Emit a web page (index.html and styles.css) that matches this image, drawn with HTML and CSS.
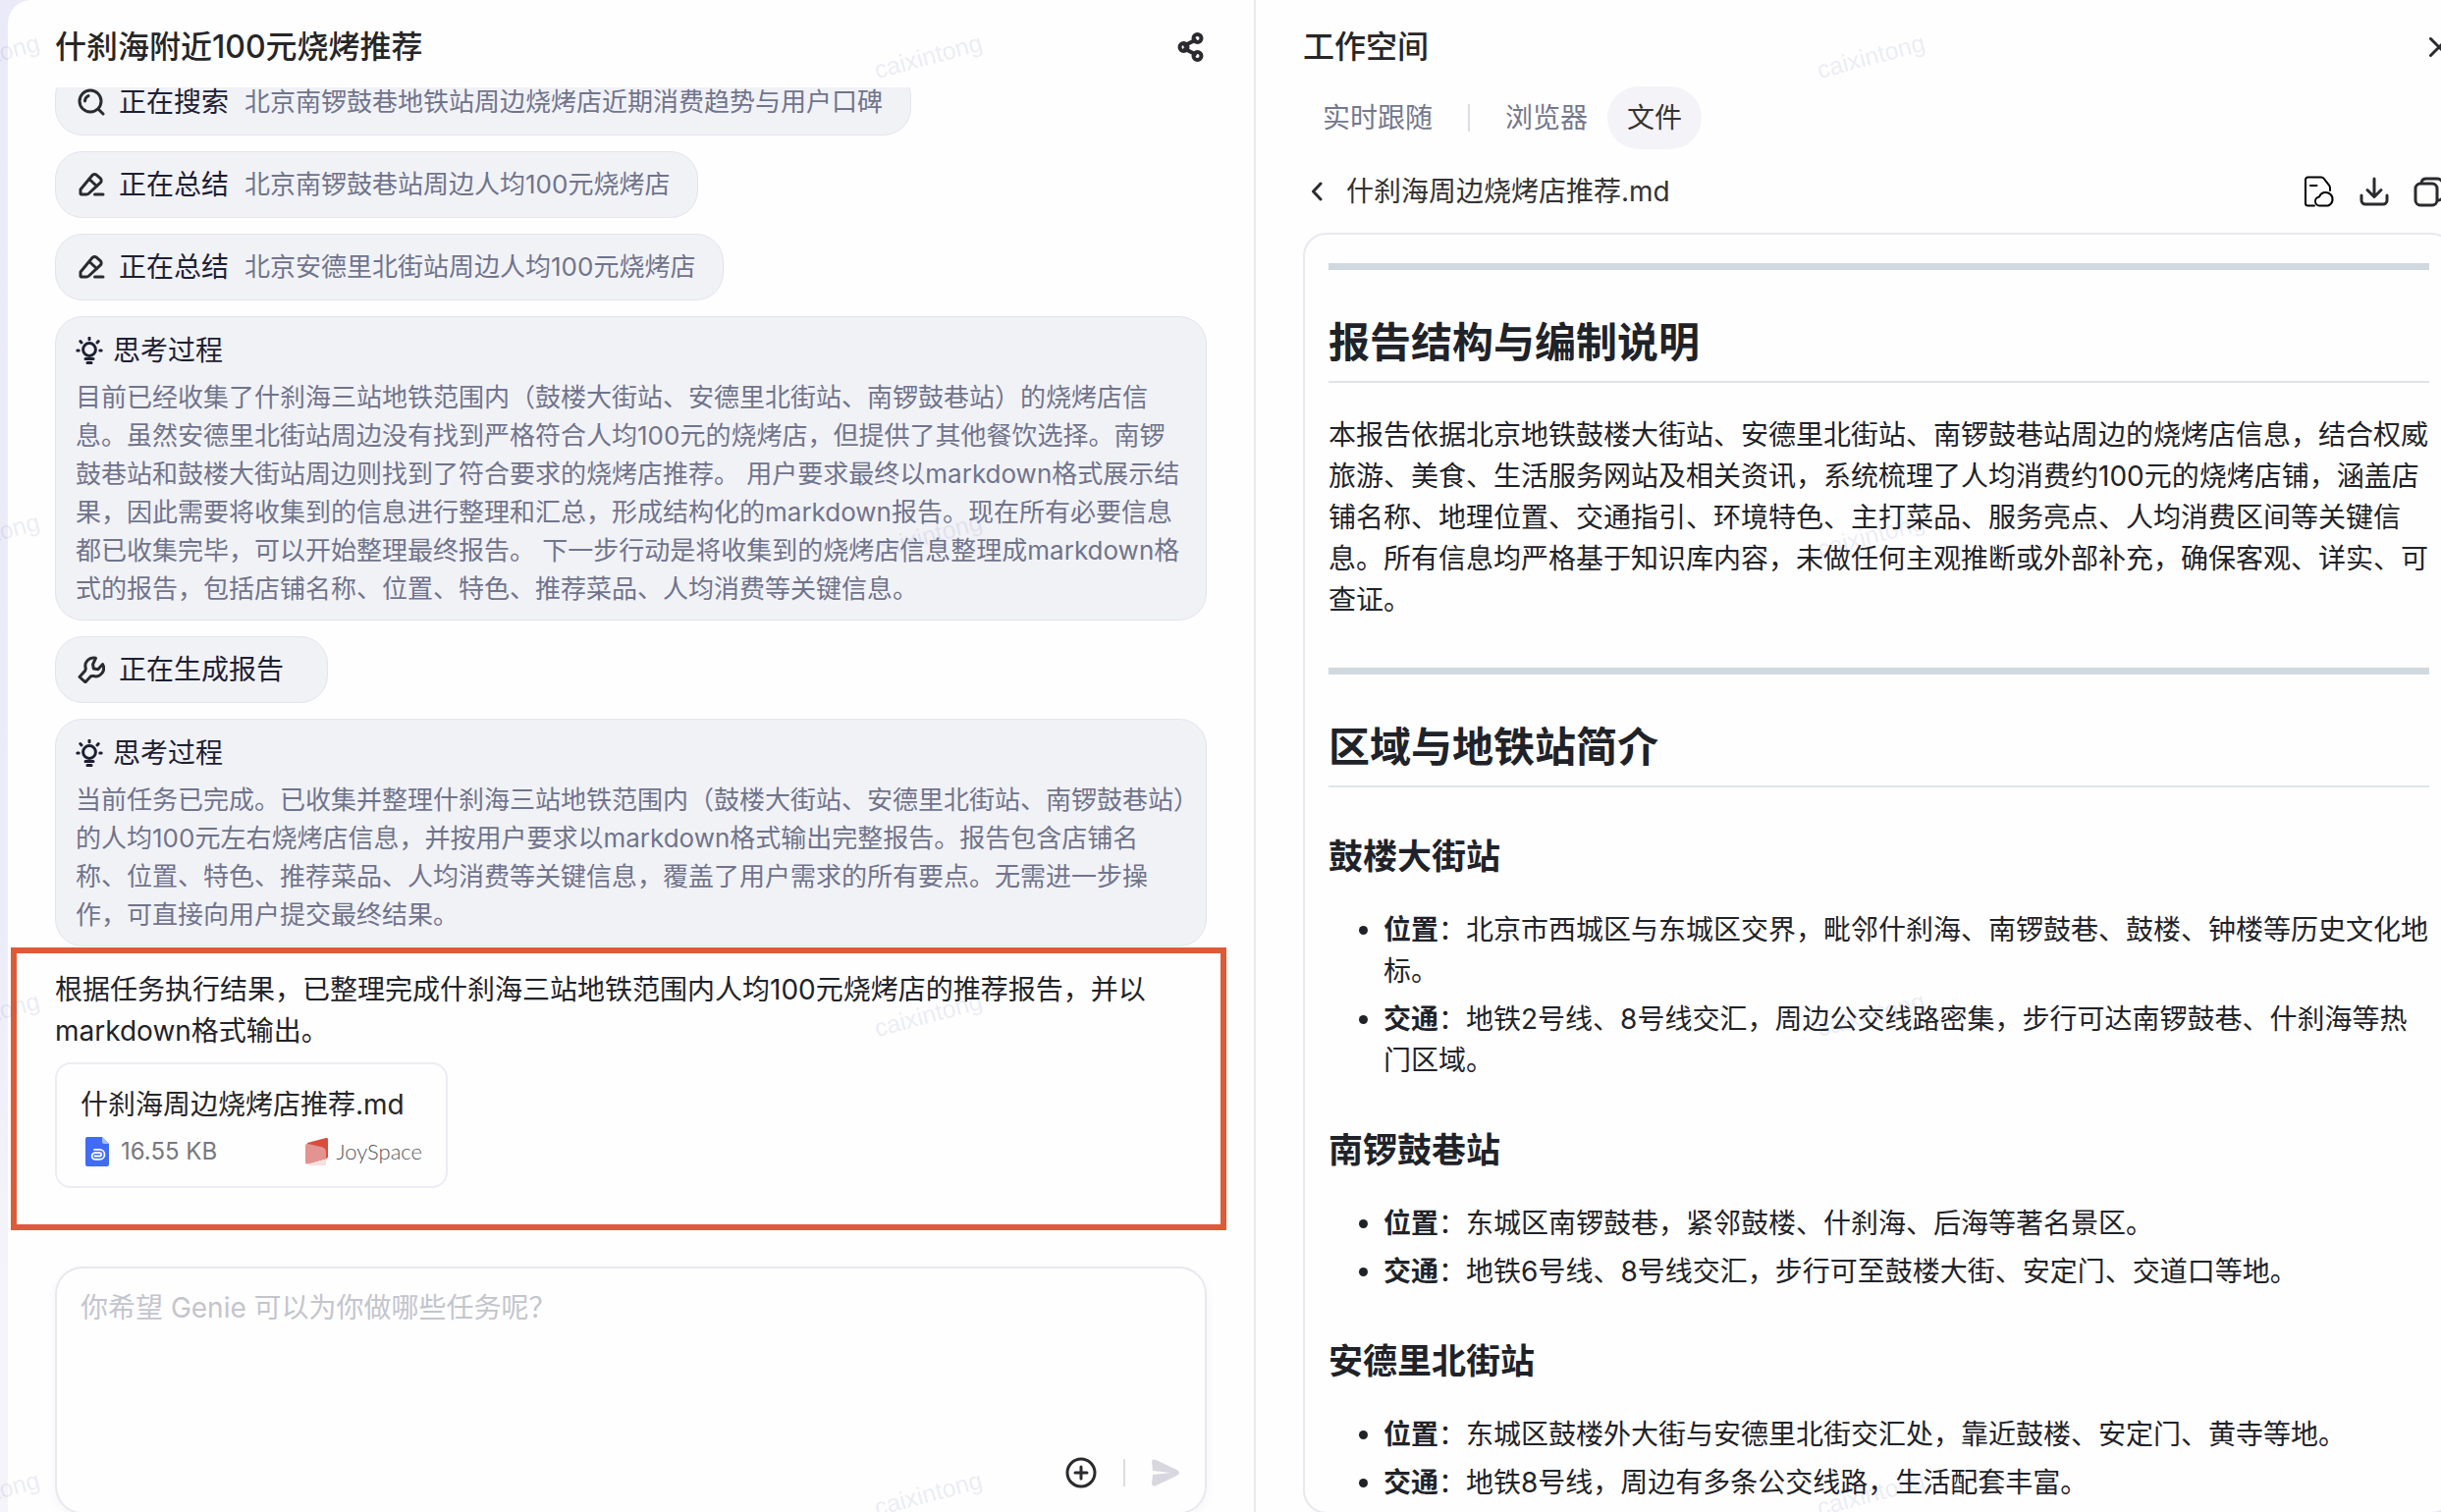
FILE: index.html
```html
<!DOCTYPE html>
<html lang="zh-CN">
  <head>
    <meta charset="UTF-8" />
    <meta name="viewport" content="width=device-width, initial-scale=1.0" />
    <title>什刹海附近100元烧烤推荐</title>
    <link rel="stylesheet" href="styles.css">
  </head>
  <body>
    <!-- Shared icons -->
    <svg class="icon-defs" aria-hidden="true">
      <symbol id="icon-pencil" viewBox="0 0 28 28">
        <path d="M3 23.500v-4.500L15 4.500a3 3 0 0 1 4.200-.3l4 3.500a3 3 0 0 1 .2 4.200L11.500 23Q10.500 24 9 24H3.500z" />
        <path d="m12 8.500 7.500 7M17.500 24H26" />
      </symbol>
      <symbol id="icon-bulb" viewBox="0 0 28 28">
        <circle cx="14" cy="13" r="6.4" />
        <path d="M14 1.2v1.6M4.8 4.6l1.2 1.3M23.2 4.6 22 5.9M1.8 14h1.4M24.8 14h1.4M10 22.6h8M12 26.6h4" />
      </symbol>
    </svg>

    <div class="app">
      <main class="chat">
        <header class="chat-header">
          <h1 class="panel-title">什刹海附近100元烧烤推荐</h1>
          <button class="icon-btn" type="button" aria-label="分享">
            <svg class="icon share" viewBox="0 0 28 30">
              <path d="m8 13 10-5M8 17l10 5" />
              <circle cx="6.5" cy="15" r="4" />
              <circle cx="20.5" cy="6" r="4" />
              <circle cx="20.5" cy="24" r="4" />
            </svg>
          </button>
        </header>

        <div class="messages">
          <div class="step">
            <svg class="icon" viewBox="0 0 28 28">
              <circle cx="13" cy="13" r="11" />
              <path d="m21 21 5 5M7.5 13a6 6 0 0 1 3.500-5.400" />
            </svg>
            <span class="step-label">正在搜索</span>
            <span class="step-detail">北京南锣鼓巷地铁站周边烧烤店近期消费趋势与用户口碑</span>
          </div>
          <div class="step">
            <svg class="icon"><use href="#icon-pencil" /></svg>
            <span class="step-label">正在总结</span>
            <span class="step-detail">北京南锣鼓巷站周边人均100元烧烤店</span>
          </div>
          <div class="step">
            <svg class="icon"><use href="#icon-pencil" /></svg>
            <span class="step-label">正在总结</span>
            <span class="step-detail">北京安德里北街站周边人均100元烧烤店</span>
          </div>

          <section class="thought">
            <h2 class="thought-title">
              <svg class="icon bulb"><use href="#icon-bulb" /></svg>
              思考过程
            </h2>
            <p>目前已经收集了什刹海三站地铁范围内（鼓楼大街站、安德里北街站、南锣鼓巷站）的烧烤店信<br />息。虽然安德里北街站周边没有找到严格符合人均100元的烧烤店，但提供了其他餐饮选择。南锣鼓巷站和鼓楼大街站周边则找到了符合要求的烧烤店推荐。 用户要求最终以markdown格式展示结果，因此需要将收集到的信息进行整理和汇总，形成结构化的markdown报告。现在所有必要信息都已收集完毕，可以开始整理最终报告。 下一步行动是将收集到的烧烤店信息整理成markdown格式的报告，包括店铺名称、位置、特色、推荐菜品、人均消费等关键信息。</p>
          </section>

          <div class="step">
            <svg class="icon" viewBox="0 0 28 28">
              <path d="M18.500 2.300A8.300 8.300 0 0 0 8.300 12.800L7.800 15 2 21.500 8 26.800l5.500-6 2.200-.4A8.300 8.300 0 0 0 25.600 8.600l-4.800 5.200-4.500-.7-.7-4.400z" />
            </svg>
            <span class="step-label">正在生成报告</span>
            <span class="step-detail"></span>
          </div>

          <section class="thought">
            <h2 class="thought-title">
              <svg class="icon bulb"><use href="#icon-bulb" /></svg>
              思考过程
            </h2>
            <p>当前任务已完成。已收集并整理什刹海三站地铁范围内（鼓楼大街站、安德里北街站、南锣鼓巷站）的人均100元左右烧烤店信息，并按用户要求以markdown格式输出完整报告。报告包含店铺名<br />称、位置、特色、推荐菜品、人均消费等关键信息，覆盖了用户需求的所有要点。无需进一步操<br />作，可直接向用户提交最终结果。</p>
          </section>

          <section class="result">
            <p>根据任务执行结果，已整理完成什刹海三站地铁范围内人均100元烧烤店的推荐报告，并以markdown格式输出。</p>
            <a class="file-card" href="#doc">
              <span class="file-name">什刹海周边烧烤店推荐.md</span>
              <span class="file-meta">
                <svg class="file-icon" viewBox="0 0 24 30">
                  <path fill="#3f6bf5" d="M2 0h15l7 7v21a2 2 0 0 1-2 2H2a2 2 0 0 1-2-2V2a2 2 0 0 1 2-2z" />
                  <path fill="#a9bdfb" d="m17 0 7 7h-5a2 2 0 0 1-2-2z" />
                  <path fill="none" stroke="#fff" stroke-width="1.800" stroke-linecap="round" d="M9.500 19.500h5a1.700 1.700 0 0 0 0-3.400H10a3.400 3.400 0 0 0 0 6.800h4.500a5 5 0 0 0 0-10H9" />
                </svg>
                <span>16.55 KB</span>
                <span class="joyspace">
                  <svg class="joy-icon" viewBox="0 0 24 28">
                    <path fill="#f7dfdf" d="M8 20h13v8H3z" />
                    <path fill="#d94c3d" d="M2 5 21 0q2-.4 2 1.500V19q0 1.500-1.500 2L3 26z" />
                    <path fill="#e39490" d="M0 8q0-2.500 2.500-2L16 9q5 1 5 5v7L2.500 26.500Q0 27 0 25z" />
                  </svg>
                  JoySpace
                </span>
              </span>
            </a>
          </section>
        </div>

        <form class="composer">
          <textarea aria-label="任务" placeholder="你希望 Genie 可以为你做哪些任务呢？"></textarea>
          <div class="composer-actions">
            <button class="icon-btn" type="button" aria-label="添加">
              <svg class="icon add" viewBox="0 0 32 32">
                <circle cx="16" cy="16" r="14" />
                <path d="M16 10v12M10 16h12" />
              </svg>
            </button>
            <span class="divider"></span>
            <button class="icon-btn" type="submit" aria-label="发送">
              <svg class="icon send" viewBox="0 0 28 28">
                <path d="M0 3.500Q0-1 4.500 1l21 10q5 3 0 6l-21 10Q0 29 0 24.500L1 16l18-2L1 12z" />
              </svg>
            </button>
          </div>
        </form>
      </main>

      <aside class="workspace">
        <header class="workspace-header">
          <h2 class="panel-title">工作空间</h2>
          <button class="icon-btn" type="button" aria-label="关闭">
            <svg class="icon close" viewBox="0 0 20 20">
              <path d="m1.500 1.500 17 17M18.500 1.500l-17 17" />
            </svg>
          </button>
        </header>

        <nav class="tabs">
          <button class="tab" type="button">实时跟随</button>
          <span class="divider"></span>
          <button class="tab" type="button">浏览器</button>
          <button class="tab active" type="button">文件</button>
        </nav>

        <div class="file-bar">
          <button class="icon-btn" type="button" aria-label="返回">
            <svg class="icon back" viewBox="0 0 12 20">
              <path d="M10 2 2.500 10l7.500 8" />
            </svg>
          </button>
          <span class="file-bar-name">什刹海周边烧烤店推荐.md</span>
          <button class="icon-btn" type="button" aria-label="保存到云文档">
            <svg class="icon doc-cloud" viewBox="0 0 32 32">
              <path d="M11 30.500H4.500a2.500 2.500 0 0 1-2.500-2.500V4a2.500 2.500 0 0 1 2.500-2.500H18q1.500 0 2.500 1.200l5.500 7Q27 11 27 12.500V15M7 10h6.500" />
              <path d="M17 30.500a4.500 4.500 0 0 1-1-9 7 7 0 1 1 9 9z" />
            </svg>
          </button>
          <button class="icon-btn" type="button" aria-label="下载">
            <svg class="icon" viewBox="0 0 32 32">
              <path d="M16 3v18M9 14.500l7 7 7-7M3 20v5a4 4 0 0 0 4 4h18a4 4 0 0 0 4-4v-5" />
            </svg>
          </button>
          <button class="icon-btn" type="button" aria-label="复制">
            <svg class="icon" viewBox="0 0 32 32">
              <rect x="2" y="8" width="22" height="22" rx="5" />
              <path d="M8 7a5 5 0 0 1 5-4h11a6 6 0 0 1 6 6v11a5 5 0 0 1-5 5" />
            </svg>
          </button>
        </div>

        <article class="markdown" id="doc">
          <hr />
          <h2>报告结构与编制说明</h2>
          <p>本报告依据北京地铁鼓楼大街站、安德里北街站、南锣鼓巷站周边的烧烤店信息，结合权威旅游、美食、生活服务网站及相关资讯，系统梳理了人均消费约100元的烧烤店铺，涵盖店铺名称、地理位置、交通指引、环境特色、主打菜品、服务亮点、人均消费区间等关键信息。所有信息均严格基于知识库内容，未做任何主观推断或外部补充，确保客观、详实、可查证。</p>
          <hr />
          <h2>区域与地铁站简介</h2>
          <h3>鼓楼大街站</h3>
          <ul>
            <li><strong>位置</strong>：北京市西城区与东城区交界，毗邻什刹海、南锣鼓巷、鼓楼、钟楼等历史文化地标。</li>
            <li><strong>交通</strong>：地铁2号线、8号线交汇，周边公交线路密集，步行可达南锣鼓巷、什刹海等热门区域。</li>
          </ul>
          <h3>南锣鼓巷站</h3>
          <ul>
            <li><strong>位置</strong>：东城区南锣鼓巷，紧邻鼓楼、什刹海、后海等著名景区。</li>
            <li><strong>交通</strong>：地铁6号线、8号线交汇，步行可至鼓楼大街、安定门、交道口等地。</li>
          </ul>
          <h3>安德里北街站</h3>
          <ul>
            <li><strong>位置</strong>：东城区鼓楼外大街与安德里北街交汇处，靠近鼓楼、安定门、黄寺等地。</li>
            <li><strong>交通</strong>：地铁8号线，周边有多条公交线路，生活配套丰富。</li>
          </ul>
        </article>
      </aside>
    </div>

    <!-- Watermark -->
    <div class="watermark" aria-hidden="true">
      <div class="watermark-grid">
        <span>caixintong</span><span>caixintong</span><span>caixintong</span>
        <span>caixintong</span><span>caixintong</span><span>caixintong</span>
        <span>caixintong</span><span>caixintong</span><span>caixintong</span>
        <span>caixintong</span><span>caixintong</span><span>caixintong</span>
      </div>
    </div>
  </body>
</html>
```
FILE: styles.css
```css
* {
  margin: 0;
  padding: 0;
  box-sizing: border-box;
}

body {
  overflow: hidden;
  background: linear-gradient(180deg, #ebeaf8 0%, #ececf9 60%, #f5f4fa 85%);
  color: #1f2329;
  font-family: Inter, "Noto Sans CJK SC", sans-serif;
  font-size: 28px;
  line-height: 42px;
}

button,
textarea {
  border: none;
  background: none;
  font: inherit;
  color: inherit;
}

.icon-defs {
  position: absolute;
  width: 0;
  height: 0;
}

.icon {
  display: block;
  flex: none;
  width: 28px;
  height: 28px;
  fill: none;
  stroke: #2b2b2f;
  stroke-width: 3;
  stroke-linecap: round;
  stroke-linejoin: round;
}

.icon-btn {
  flex: none;
  cursor: pointer;
}

.divider {
  width: 2px;
  height: 28px;
  background: #dcdce4;
}

/* Both panels run slightly past the window edge */
.app {
  display: grid;
  grid-template-columns: 1271fr 1221fr;
  width: calc(100vw + 14px);
  height: calc(100vh + 2px);
  padding-left: 8px;
}

.panel-title {
  font-size: 32px;
  font-weight: 500;
  line-height: 48px;
  color: #262628;
}

/* Chat panel */
.chat {
  display: flex;
  flex-direction: column;
  min-width: 0;
  min-height: 0;
  padding: 0 48px;
  background: #fefefe;
  border-right: 2px solid #e8e8ef;
  border-top-left-radius: 24px;
}

.chat-header {
  display: flex;
  flex: none;
  align-items: center;
  justify-content: space-between;
  height: 89px;
  padding: 6px 2px 0 0;
}

/* Scrolled to the newest message */
.messages {
  display: flex;
  flex: 1;
  flex-direction: column;
  align-items: flex-start;
  justify-content: flex-end;
  gap: 16px;
  min-height: 0;
  margin: 0 -48px;
  padding: 0 48px 80px;
  overflow: hidden;
}

.step {
  display: flex;
  flex: none;
  align-items: center;
  height: 68px;
  padding: 0 28px 0 22px;
  border: 1px solid #e3e4ee;
  border-radius: 28px;
  background: #f1f2f6;
}

.step-label {
  margin: 0 16px 0 14px;
  color: #1d2033;
}

.step-detail {
  font-size: 26px;
  color: #70748c;
}

.thought {
  flex: none;
  align-self: stretch;
  padding: 12px 20px;
  border: 1px solid #e3e4ee;
  border-radius: 28px;
  background: #f1f2f6;
  color: #70748c;
  font-size: 26px;
  line-height: 39px;
}

.thought-title {
  display: flex;
  align-items: center;
  gap: 10px;
  margin-bottom: 6px;
  color: #1d2033;
  font-size: 28px;
  font-weight: 400;
  line-height: 44px;
}

.bulb {
  stroke: #1d2033;
}

.result {
  position: relative;
  flex: none;
  align-self: stretch;
  padding-top: 7px;
}

/* Highlight frame around the answer */
.result::before {
  content: "";
  position: absolute;
  inset: -15px -20px -43px -45px;
  border: 6px solid #dd5b36;
  pointer-events: none;
}

.file-card {
  display: block;
  width: 400px;
  margin-top: 11px;
  padding: 20px 24px 14px;
  border: 2px solid #ececf4;
  border-radius: 16px;
  color: #262628;
  text-decoration: none;
}

.file-name {
  display: block;
}

.file-meta {
  display: flex;
  align-items: center;
  gap: 12px;
  margin-top: 6px;
  padding-left: 5px;
  color: #77787f;
  font-size: 24px;
}

.file-icon {
  width: 24px;
  height: 30px;
}

.joyspace {
  display: flex;
  align-items: center;
  gap: 8px;
  margin-left: auto;
  color: #55565a;
  font-family: Lato, sans-serif;
  font-size: 22px;
  font-weight: 300;
}

.joy-icon {
  width: 24px;
  height: 28px;
}

.composer {
  display: flex;
  flex: none;
  flex-direction: column;
  height: 252px;
  border: 2px solid #e8e8ef;
  border-radius: 28px;
  box-shadow: 0 4px 12px rgba(30, 30, 60, 0.04);
}

.composer textarea {
  flex: 1;
  padding: 19px 24px;
  outline: none;
  resize: none;
}

.composer textarea::placeholder {
  color: #c3c5cd;
  opacity: 1;
}

.composer-actions {
  display: flex;
  align-items: center;
  justify-content: flex-end;
  gap: 27px;
  padding: 0 26px 24px;
}

.add {
  width: 32px;
  height: 32px;
}

.share {
  height: 30px;
  stroke-width: 4;
}

.send {
  fill: #d8d7df;
  stroke: none;
}

/* Workspace panel */
.workspace {
  display: flex;
  flex-direction: column;
  min-width: 0;
  min-height: 0;
  padding-left: 48px;
  background: #fefefe;
}

.workspace-header {
  display: flex;
  align-items: center;
  justify-content: space-between;
  padding: 24px 6px 16px 0;
}

.close {
  width: 20px;
  height: 20px;
}

.tabs {
  display: flex;
  align-items: center;
  height: 64px;
}

.tabs .divider {
  margin: 0 16px;
}

.tab {
  height: 64px;
  padding: 0 20px;
  border-radius: 32px;
  color: #74788d;
  cursor: pointer;
}

.tab.active {
  background: #f4f3f8;
  color: #333;
}

.file-bar {
  display: flex;
  align-items: center;
  gap: 24px;
  height: 85px;
  padding: 0 10px 0 8px;
  color: #333;
}

.file-bar .icon {
  width: 32px;
  height: 32px;
}

.file-bar .back {
  width: 12px;
  height: 20px;
}

.file-bar .doc-cloud {
  stroke: #000;
  stroke-width: 2;
}

.file-bar-name {
  flex: 1;
}

/* Markdown preview */
.markdown {
  flex: 1;
  min-height: 0;
  padding: 29px 24px;
  border: 2px solid #e8e8ef;
  border-radius: 24px;
  overflow: hidden;
}

.markdown hr {
  height: 7px;
  margin: 48px 0;
  border: none;
  background: #d1d9e0;
}

.markdown hr:first-child {
  margin-top: 0;
}

.markdown h2 {
  margin: 48px 0 32px;
  padding-bottom: 13px;
  border-bottom: 2px solid #dfe4e9;
  font-size: 42px;
  font-weight: 600;
  line-height: 52px;
}

.markdown h3 {
  margin: 48px 0 32px;
  font-size: 35px;
  font-weight: 600;
  line-height: 44px;
}

.markdown ul {
  margin-bottom: 32px;
  padding-left: 56px;
}

.markdown li + li {
  margin-top: 7px;
}

.markdown strong {
  font-weight: 600;
}

/* Watermark overlay */
.watermark {
  position: fixed;
  inset: 0;
  overflow: hidden;
  pointer-events: none;
}

.watermark-grid {
  display: grid;
  grid-template-columns: repeat(3, 960px);
  grid-auto-rows: 488px;
  place-items: center;
  margin: -187px 0 0 -495px;
  color: rgba(100, 110, 180, 0.12);
  font-family: "Liberation Sans", sans-serif;
  font-size: 25px;
}

.watermark-grid span {
  transform: rotate(-15deg);
}
```
